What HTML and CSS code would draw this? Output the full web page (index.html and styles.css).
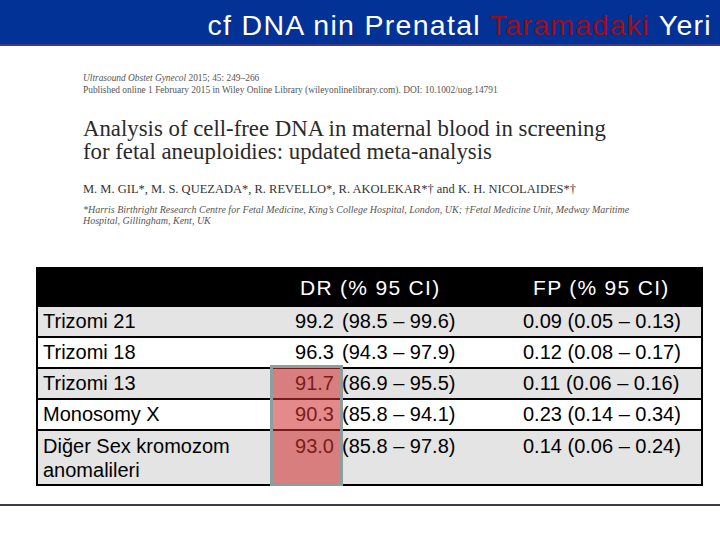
FILE: index.html
```html
<!DOCTYPE html>
<html lang="tr">
<head>
<meta charset="utf-8">
<title>cf DNA nin Prenatal Taramadaki Yeri</title>
<link rel="stylesheet" href="styles.css">
</head>
<body>
<header class="topbar">
  <h1 class="title">cf DNA nin Prenatal <span class="accent">Taramadaki</span> Yeri</h1>
</header>

<section class="paper">
  <p class="journal"><i>Ultrasound Obstet Gynecol</i> 2015; 45: 249–266</p>
  <p class="journal">Published online 1 February 2015 in Wiley Online Library (wileyonlinelibrary.com). DOI: 10.1002/uog.14791</p>
  <h2 class="paper-title">Analysis of cell-free DNA in maternal blood in screening<br>for fetal aneuploidies: updated meta-analysis</h2>
  <p class="authors">M. M. GIL*, M. S. QUEZADA*, R. REVELLO*, R. AKOLEKAR*† and K. H. NICOLAIDES*†</p>
  <p class="affil">*Harris Birthright Research Centre for Fetal Medicine, King’s College Hospital, London, UK; †Fetal Medicine Unit, Medway Maritime<br>Hospital, Gillingham, Kent, UK</p>
</section>

<div class="table">
  <div class="row head">
    <div class="h-dr">DR (% 95 CI)</div>
    <div class="h-fp">FP (% 95 CI)</div>
  </div>
  <div class="row grey">
    <div class="lab">Trizomi 21</div><div class="dr">99.2</div><div class="ci">(98.5 – 99.6)</div><div class="fp">0.09 (0.05 – 0.13)</div>
  </div>
  <div class="row">
    <div class="lab">Trizomi 18</div><div class="dr">96.3</div><div class="ci">(94.3 – 97.9)</div><div class="fp">0.12 (0.08 – 0.17)</div>
  </div>
  <div class="row grey">
    <div class="lab">Trizomi 13</div><div class="dr">91.7</div><div class="ci">(86.9 – 95.5)</div><div class="fp">0.11 (0.06 – 0.16)</div>
  </div>
  <div class="row">
    <div class="lab">Monosomy X</div><div class="dr">90.3</div><div class="ci">(85.8 – 94.1)</div><div class="fp">0.23 (0.14 – 0.34)</div>
  </div>
  <div class="row grey tall">
    <div class="lab">Diğer Sex kromozom anomalileri</div><div class="dr">93.0</div><div class="ci">(85.8 – 97.8)</div><div class="fp">0.14 (0.06 – 0.24)</div>
  </div>
  <div class="highlight"></div>
</div>

<hr class="rule">
</body>
</html>
```

FILE: styles.css
```css
html, body {
  margin: 0;
  padding: 0;
  background: #ffffff;
}

body {
  width: 720px;
  height: 540px;
  overflow: hidden;
  font-family: "Liberation Sans", Arial, sans-serif;
}

.topbar {
  height: 44px;
  background: #033296;
  border-bottom: 2px solid #3b3a8a;
  display: flex;
  justify-content: flex-end;
  padding-right: 8px;
}

.title {
  margin: 0;
  padding-top: 6px;
  font-weight: normal;
  font-size: 28.5px;
  line-height: 38px;
  letter-spacing: 1.3px;
  color: #ffffff;
  white-space: nowrap;
}

.accent {
  color: #a00c12;
}

.paper {
  padding-left: 83px;
  font-family: "Liberation Serif", "Times New Roman", serif;
}

.journal {
  margin: 0;
  font-size: 9.4px;
  line-height: 12px;
  color: #555555;
  white-space: nowrap;
}

.journal:first-child {
  margin-top: 26px;
}

.paper-title {
  margin: 21px 0 0 0;
  font-weight: normal;
  font-size: 22.8px;
  line-height: 23px;
  color: #2a2a2a;
  white-space: nowrap;
}

.authors {
  margin: 19px 0 0 0;
  font-size: 12.5px;
  line-height: 14px;
  color: #333333;
  white-space: nowrap;
}

.affil {
  margin: 8px 0 0 0;
  font-size: 10px;
  line-height: 11px;
  font-style: italic;
  color: #555555;
  white-space: nowrap;
}

.table {
  position: relative;
  margin: 41px 0 0 36px;
  width: 667px;
  box-sizing: border-box;
  border: 2px solid #000000;
  border-top: 0;
  font-size: 20px;
  color: #000000;
}

.row {
  display: grid;
  grid-template-columns: 232px 72px 173px 1fr;
  height: 29px;
  line-height: 29px;
  background: #ffffff;
  border-top: 2px solid #000000;
}

.row.grey {
  background: #e4e4e4;
}

.row.head {
  height: 38px;
  border-top: 0;
  background: #000000;
  color: #ffffff;
  font-size: 21px;
  letter-spacing: 1.3px;
}

.h-dr {
  grid-column: 2 / 4;
  padding: 4px 0 0 30px;
  line-height: 34px;
}

.h-fp {
  padding: 4px 0 0 18px;
  line-height: 34px;
}

.lab {
  padding-left: 5px;
}

.dr {
  text-align: right;
  padding-right: 8px;
}

.fp {
  padding-left: 8px;
}

.row.tall {
  height: 48px;
  line-height: 24px;
  padding-top: 3px;
  padding-bottom: 2px;
}

.highlight {
  position: absolute;
  left: 232px;
  top: 98px;
  width: 73px;
  height: 121px;
  box-sizing: border-box;
  border: 3px solid #8c9e9e;
  background: rgba(210, 50, 50, 0.57);
}

.rule {
  margin: 18px 0 0 0;
  border: 0;
  height: 2px;
  background: #3a3a48;
}
```
